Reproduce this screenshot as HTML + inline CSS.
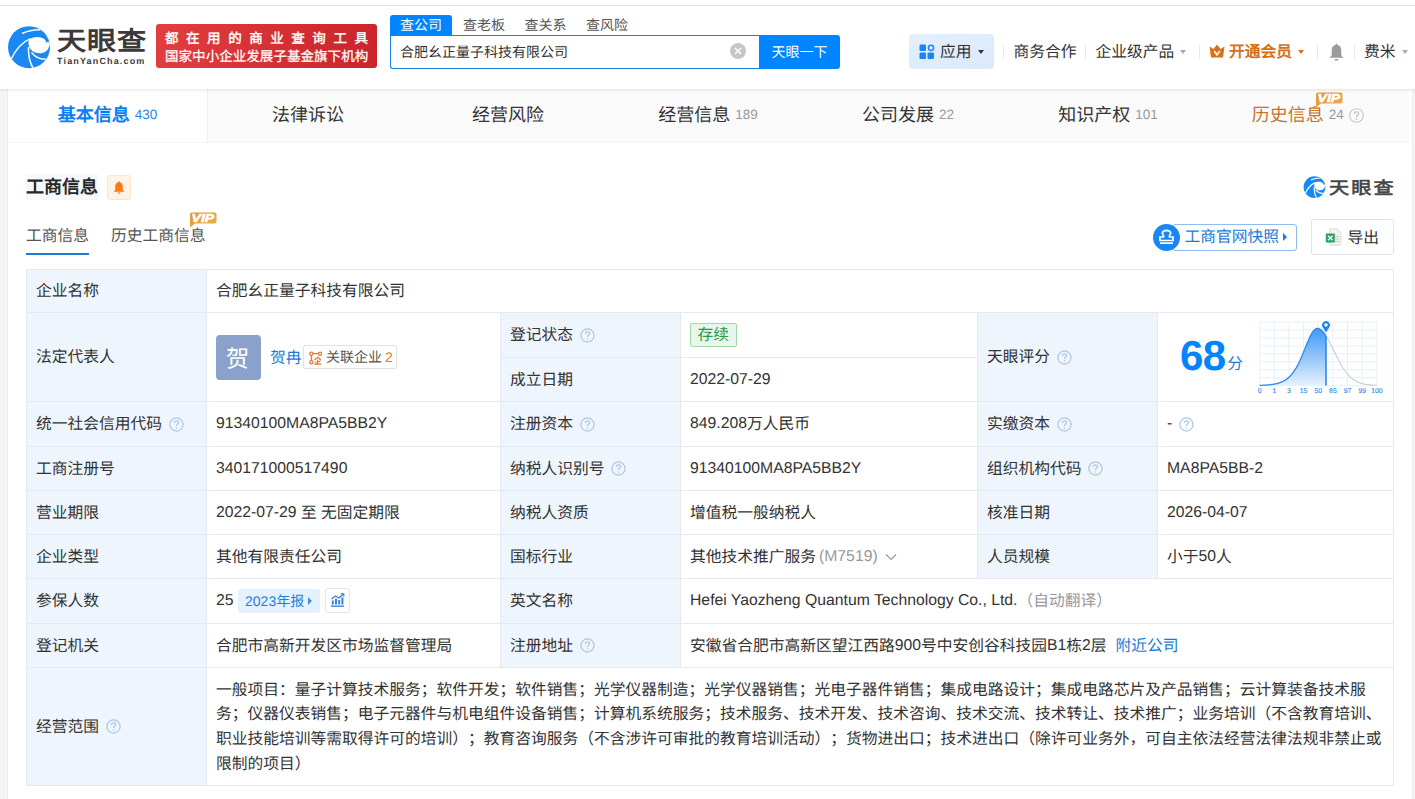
<!DOCTYPE html>
<html lang="zh-CN"><head><meta charset="utf-8">
<style>
*{box-sizing:border-box;margin:0;padding:0}
html,body{width:1415px;height:799px;overflow:hidden}
body{background:#f5f5f5;font-family:"Liberation Sans",sans-serif;color:#333;text-rendering:geometricPrecision;text-spacing-trim:space-all;position:relative}
.a{position:absolute;white-space:nowrap}
#hdr{position:absolute;left:0;top:0;width:1415px;height:89px;background:#fff}
#topline{position:absolute;left:0;top:5px;width:1415px;height:1px;background:#e6e6e6}
.sep{position:absolute;top:45px;width:1px;height:14px;background:#e8e8e8}
.tri{position:absolute;width:0;height:0;border-left:3.5px solid transparent;border-right:3.5px solid transparent;border-top:4.5px solid #999}
#card{position:absolute;left:8px;top:89px;width:1404px;height:710px;background:#fff}
#tabbar{position:absolute;left:0;top:0;width:1401px;height:53px;background:#fafafa}
.tab{position:absolute;top:0;width:200px;height:53px;line-height:53px;text-align:center;font-size:18px;color:#333}
.tab .n{font-size:13.5px;color:#999;margin-left:5px;position:relative;top:-2.5px}
.cell{position:absolute;display:flex;align-items:center;font-size:15.75px;line-height:20px;color:#333;white-space:nowrap}
.lab{background:#eef5fd;padding-left:9px}
.val{background:#fff;padding-left:9px}
.hl{position:absolute;background:#e4edf6}
.qi{margin-left:6.5px;flex:none}
.c{position:relative;top:1.2px}
.q{display:inline-block;width:14px;height:14px;border:1px solid #b7cfe8;border-radius:50%;margin-left:7px;position:relative;flex:none}
.q:after{content:"?";position:absolute;left:0;top:0;width:12px;height:12px;line-height:12px;text-align:center;font-size:10px;color:#b7cfe8}
</style></head><body>
<div id="hdr">
  <div id="topline"></div>
  <svg class="a" style="left:5px;top:22px" width="50" height="50" viewBox="0 0 50 50">
    <defs><clipPath id="lc"><circle cx="24" cy="25.2" r="21"/></clipPath></defs>
    <circle cx="24" cy="25.2" r="21" fill="#1a88f3"/>
    <g clip-path="url(#lc)">
    <path d="M24 17.5 C27 15 33 14.3 37.5 16 C40 17 41 18.5 41.2 20.5 L47 19 L47 24 L44.2 24 C43.5 28.5 39.5 31.3 34.5 31.3 C28.5 31.3 24 27 23.5 22 C23.4 20.3 23.6 18.8 24 17.5Z" fill="#fff"/>
    <path d="M6 37.5 C10.5 28 17 20 25.5 16.6" stroke="#fff" stroke-width="1.5" fill="none"/>
    <path d="M17 11.5 C22.5 9 29 7.6 35.5 7.8" stroke="#fff" stroke-width="1.5" fill="none"/>
    <path d="M23.6 25 C23 33 24.5 40 28.5 47" stroke="#fff" stroke-width="1.6" fill="none"/>
    <path d="M26.5 30.5 C30.5 35.5 35.5 37.5 41 37.2" stroke="#fff" stroke-width="1.5" fill="none"/>
    </g>
  </svg>
  <div class="a" style="left:56.5px;top:24px;font-size:26px;line-height:34px;font-weight:bold;color:#3d3939;letter-spacing:0.8px;transform:scaleX(1.12);transform-origin:0 0">天眼查</div>
  <div class="a" style="left:57px;top:55px;font-size:9px;line-height:12px;font-weight:bold;color:#3f3b3b;letter-spacing:1.15px">TianYanCha.com</div>
  <div class="a" style="left:156px;top:24px;width:221px;height:44px;border-radius:3px;background:linear-gradient(100deg,#e23d3f,#c9252a)"></div>
  <div class="a" style="left:165px;top:28.5px;font-size:13.5px;line-height:20px;color:#fff;letter-spacing:7.55px;-webkit-text-stroke:0.45px #fff">都在用的商业查询工具</div>
  <div class="a" style="left:165px;top:47px;font-size:13.5px;line-height:20px;color:#fff;letter-spacing:0.05px;-webkit-text-stroke:0.25px #fff">国家中小企业发展子基金旗下机构</div>
  <div class="a" style="left:390px;top:15px;width:62px;height:21px;background:#0084ff;border-radius:3px 3px 0 0"></div>
  <div class="a" style="left:400px;top:15px;font-size:14px;line-height:20px;color:#fff">查公司</div>
  <div class="a" style="left:463px;top:15px;font-size:14px;line-height:20px;color:#555">查老板</div>
  <div class="a" style="left:524.5px;top:15px;font-size:14px;line-height:20px;color:#555">查关系</div>
  <div class="a" style="left:586px;top:15px;font-size:14px;line-height:20px;color:#555">查风险</div>
  <div class="a" style="left:390px;top:35px;width:371px;height:34px;border:1px solid #1a7fe6;border-right:none;border-radius:0 0 0 3px;background:#fff"></div>
  <div class="a" style="left:400px;top:42px;font-size:14px;line-height:20px;color:#333">合肥幺正量子科技有限公司</div>
  <div class="a" style="left:729.8px;top:43px;width:16px;height:16px;border-radius:50%;background:#c4c6cc"></div>
  <svg class="a" style="left:729.8px;top:43px" width="16" height="16" viewBox="0 0 16 16"><path d="M5 5L11 11M11 5L5 11" stroke="#fff" stroke-width="1.5"/></svg>
  <div class="a" style="left:759px;top:35px;width:81px;height:34px;background:#0084ff;border-radius:0 3px 3px 0;color:#fff;font-size:14px;line-height:34px;text-align:center">天眼一下</div>

  <div class="a" style="left:909px;top:34px;width:85px;height:35px;border-radius:4px;background:linear-gradient(160deg,#e3effd,#dbe9fb)"></div>
  <svg class="a" style="left:919px;top:44px" width="16" height="16" viewBox="0 0 16 16">
    <rect x="0.5" y="0.5" width="6.5" height="6.5" rx="1.2" fill="#1a86f5"/>
    <circle cx="12" cy="3.8" r="2.6" fill="none" stroke="#1a86f5" stroke-width="1.5"/>
    <rect x="0.5" y="8.5" width="6.5" height="6.5" rx="1.2" fill="#1a86f5"/>
    <rect x="8.5" y="8.5" width="6.5" height="6.5" rx="1.2" fill="#1a86f5"/>
  </svg>
  <div class="a" style="left:940px;top:42px;font-size:15.75px;line-height:22px;color:#333">应用</div>
  <div class="tri" style="left:977.5px;top:50px;border-top-color:#333"></div>
  <div class="sep" style="left:1003px"></div>
  <div class="a" style="left:1013.5px;top:42px;font-size:15.75px;line-height:22px;color:#333">商务合作</div>
  <div class="sep" style="left:1085px"></div>
  <div class="a" style="left:1095.5px;top:42px;font-size:15.75px;line-height:22px;color:#333">企业级产品</div>
  <div class="tri" style="left:1180px;top:50px;border-top-color:#aaa"></div>
  <div class="sep" style="left:1199px"></div>
  <svg class="a" style="left:1209px;top:44px" width="16" height="14" viewBox="0 0 16 14">
    <path d="M0.5 2.5 L4.5 5 L8 0.5 L11.5 5 L15.5 2.5 L14 13.5 L2 13.5Z" fill="#d9701a"/>
    <path d="M5.2 7 L8 10.8 L10.8 7" stroke="#fff" stroke-width="1.6" fill="none"/>
  </svg>
  <div class="a" style="left:1229px;top:42px;font-size:15.75px;line-height:22px;color:#d5701a;font-weight:bold">开通会员</div>
  <div class="tri" style="left:1298px;top:50px;border-top-color:#d5701a"></div>
  <div class="sep" style="left:1317px"></div>
  <svg class="a" style="left:1329px;top:43px" width="15" height="18" viewBox="0 0 15 18">
    <path d="M7.5 0.5 C8.3 0.5 8.3 1.5 8.3 1.7 C11.5 2.5 12.3 5 12.3 8 L12.3 12.5 L14.5 14.8 L0.5 14.8 L2.7 12.5 L2.7 8 C2.7 5 3.5 2.5 6.7 1.7 C6.7 1.5 6.7 0.5 7.5 0.5Z" fill="#9a9ca0"/>
    <rect x="5.8" y="16" width="3.4" height="1.6" fill="#9a9ca0"/>
  </svg>
  <div class="sep" style="left:1354px"></div>
  <div class="a" style="left:1364px;top:42px;font-size:15.75px;line-height:22px;color:#333">费米</div>
  <div class="tri" style="left:1401.5px;top:50px;border-top-color:#aaa"></div>
</div>
<div id="card"></div>
<div class="a" style="left:7px;top:89px;width:1px;height:710px;background:#ededed"></div>
<div class="a" style="left:1412px;top:89px;width:1px;height:710px;background:#ededed"></div>
<div class="a" style="left:8px;top:89px;width:1401px;height:53px;background:#fafafa"></div>
<div class="a" style="left:8px;top:89px;width:199px;height:53px;background:#fff"></div>
<div class="a" style="left:207px;top:89px;width:1px;height:53px;background:#f0f0f0"></div>
<div class="a" style="left:8px;top:142px;width:1401px;height:1px;background:#f4f4f4"></div>
<div class="a" style="left:0;top:89px;width:1415px;height:4px;background:linear-gradient(rgba(0,0,0,0.075),rgba(0,0,0,0.02) 60%,rgba(0,0,0,0))"></div>
<div class="tab" style="left:8px;top:89px;width:199px"><span style="color:#0a80f2;font-weight:bold">基本信息</span><span class="n" style="color:#2a86e0">430</span></div>
<div class="tab" style="left:208px;top:89px">法律诉讼</div>
<div class="tab" style="left:408px;top:89px">经营风险</div>
<div class="tab" style="left:608px;top:89px">经营信息<span class="n">189</span></div>
<div class="tab" style="left:808px;top:89px">公司发展<span class="n">22</span></div>
<div class="tab" style="left:1008px;top:89px">知识产权<span class="n">101</span></div>
<div class="tab" style="left:1208px;top:89px"><span style="color:#c7742b">历史信息</span><span class="n">24</span><svg width="15" height="15" viewBox="0 0 15 15" style="margin-left:5.5px;vertical-align:-2px"><circle cx="7.5" cy="7.5" r="6.8" fill="none" stroke="#c3c8d0" stroke-width="1.1"/><path d="M5.4 5.9 C5.4 4.5 6.3 3.7 7.5 3.7 C8.8 3.7 9.6 4.5 9.6 5.6 C9.6 6.9 7.6 7.1 7.6 8.6 V9.2" fill="none" stroke="#b9bec7" stroke-width="1.15"/><circle cx="7.6" cy="11.1" r="0.8" fill="#b9bec7"/></svg></div>
<svg class="a" style="left:1315px;top:92px" width="28" height="16" viewBox="0 0 28 16"><defs><linearGradient id="vipg" x1="0" y1="0" x2="1" y2="1"><stop offset="0" stop-color="#e6952c"/><stop offset="1" stop-color="#efae55"/></linearGradient></defs>
  <path d="M3 0.5 H25.5 Q27.5 0.5 27.5 2.5 V9.5 Q27.5 11.5 25.5 11.5 H6 L1 15.5 V2.5 Q1 0.5 3 0.5Z" fill="url(#vipg)"/>
  <text x="2.6" y="10" font-family="Liberation Sans" font-weight="bold" font-style="italic" font-size="11.5" fill="#fff" stroke="#fff" stroke-width="0.6" textLength="22.5" lengthAdjust="spacingAndGlyphs">VIP</text>
</svg>

<div class="a" style="left:26px;top:174px;width:72px;height:26px;background:#f5f9fe"></div>
<div class="a" style="left:26px;top:174px;font-size:18px;line-height:26px;font-weight:bold;color:#282828">工商信息</div>
<div class="a" style="left:107px;top:175px;width:24px;height:25px;background:#fff3e8;border:1px solid #fbe4d2;border-radius:3px"></div>
<svg class="a" style="left:113px;top:181px" width="12" height="13" viewBox="0 0 12 13">
  <path d="M6 0.3 C6.7 0.3 6.8 1 6.8 1.2 C9.3 1.8 9.8 4 9.8 6 L9.8 9 L11.6 10.8 L0.4 10.8 L2.2 9 L2.2 6 C2.2 4 2.7 1.8 5.2 1.2 C5.2 1 5.3 0.3 6 0.3Z" fill="#ff7a0e"/>
  <path d="M4.3 11.6 H7.7 Q7.2 12.8 6 12.8 Q4.8 12.8 4.3 11.6Z" fill="#ff7a0e"/>
</svg>
<svg class="a" style="left:1302px;top:174px" width="26" height="26" viewBox="0 0 50 50">
    <defs><clipPath id="lc2"><circle cx="24" cy="25.2" r="21"/></clipPath></defs>
    <circle cx="24" cy="25.2" r="21" fill="#1a88f3"/>
    <g clip-path="url(#lc2)">
    <path d="M24 17.5 C27 15 33 14.3 37.5 16 C40 17 41 18.5 41.2 20.5 L47 19 L47 24 L44.2 24 C43.5 28.5 39.5 31.3 34.5 31.3 C28.5 31.3 24 27 23.5 22 C23.4 20.3 23.6 18.8 24 17.5Z" fill="#fff"/>
    <path d="M6 37.5 C10.5 28 17 20 25.5 16.6" stroke="#fff" stroke-width="2.2" fill="none"/>
    <path d="M17 11.5 C22.5 9 29 7.6 35.5 7.8" stroke="#fff" stroke-width="2.2" fill="none"/>
    <path d="M23.6 25 C23 33 24.5 40 28.5 47" stroke="#fff" stroke-width="2.3" fill="none"/>
    <path d="M26.5 30.5 C30.5 35.5 35.5 37.5 41 37.2" stroke="#fff" stroke-width="2.2" fill="none"/>
    </g>
</svg>
<div class="a" style="left:1329px;top:174.5px;font-size:17.5px;line-height:26px;font-weight:bold;color:#4a4848;letter-spacing:1.8px;transform:scaleX(1.15);transform-origin:0 0">天眼查</div>

<div class="a" style="left:26px;top:226px;font-size:15.75px;line-height:22px;color:#555">工商信息</div>
<div class="a" style="left:26px;top:253px;width:63px;height:2px;background:#1f7ad8"></div>
<div class="a" style="left:111px;top:226px;font-size:15.75px;line-height:22px;color:#555">历史工商信息</div>
<svg class="a" style="left:189px;top:212px" width="28" height="16" viewBox="0 0 28 16"><defs><linearGradient id="vipg2" x1="0" y1="1" x2="1" y2="0"><stop offset="0" stop-color="#e6952c"/><stop offset="0.5" stop-color="#efac55"/><stop offset="1" stop-color="#e3922a"/></linearGradient></defs>
  <path d="M3 0.5 H25.5 Q27.5 0.5 27.5 2.5 V9.5 Q27.5 11.5 25.5 11.5 H6 L1 15.5 V2.5 Q1 0.5 3 0.5Z" fill="url(#vipg)"/>
  <text x="2.6" y="10" font-family="Liberation Sans" font-weight="bold" font-style="italic" font-size="11.5" fill="#fff" stroke="#fff" stroke-width="0.6" textLength="22.5" lengthAdjust="spacingAndGlyphs">VIP</text>
</svg>

<div class="a" style="left:1172px;top:224px;width:125px;height:27px;border:1px solid #8ebcef;border-radius:3px"></div>
<div class="a" style="left:1153px;top:223.5px;width:27px;height:27px;border-radius:50%;background:#1a86f3"></div>
<svg class="a" style="left:1153px;top:223.5px" width="27" height="27" viewBox="0 0 27 27">
  <path d="M10.5 13 L10.5 11.5 C8.5 10 8.8 6.5 13.5 6.3 C18.2 6.5 18.5 10 16.5 11.5 L16.5 13 L20 13 L20 16.5 L7 16.5 L7 13Z" fill="none" stroke="#fff" stroke-width="1.7"/>
  <rect x="7" y="18.3" width="13" height="1.7" fill="#fff"/>
</svg>
<div class="a" style="left:1184.5px;top:227px;font-size:15.75px;line-height:22px;color:#1a7ad8">工商官网快照</div>
<div class="a" style="left:1283px;top:233px;width:0;height:0;border-top:4px solid transparent;border-bottom:4px solid transparent;border-left:4.5px solid #1a7ad8"></div>

<div class="a" style="left:1311px;top:219px;width:83px;height:36px;border:1px solid #dfe3ea;border-radius:3px"></div>
<svg class="a" style="left:1325px;top:228px" width="17" height="18" viewBox="0 0 17 18">
  <path d="M4.5 0.8 H12 L15.8 4.6 V16.5 Q15.8 17.2 15 17.2 H5.3 Q4.5 17.2 4.5 16.5Z" fill="#f1f1f1" stroke="#d6d6d6" stroke-width="0.8"/>
  <rect x="10.3" y="8" width="4" height="1" fill="#c9c9c9"/><rect x="10.3" y="10.5" width="4" height="1" fill="#c9c9c9"/><rect x="10.3" y="13" width="4" height="1" fill="#c9c9c9"/>
  <rect x="0.8" y="5.5" width="9" height="9" rx="0.8" fill="#21a464"/>
  <path d="M3 7.8 L7.6 12.2 M7.6 7.8 L3 12.2" stroke="#fff" stroke-width="1.4"/>
</svg>
<div class="a" style="left:1347.5px;top:227.5px;font-size:15.75px;line-height:22px;color:#333">导出</div>
<!--TABLE-->
<div class="a" style="left:26px;top:269px;width:1368px;height:517px;background:#e5eaf1"></div>
<div class="cell lab" style="left:27px;top:270px;width:179px;height:42px;"><span style="white-space:pre"><span class="c">企业名称</span></span></div>
<div class="cell val" style="left:207px;top:270px;width:1186px;height:42px;"><span style="white-space:pre"><span class="c">合肥幺正量子科技有限公司</span></span></div>
<div class="cell lab" style="left:27px;top:313px;width:179px;height:88px;"><span style="white-space:pre"><span class="c">法定代表人</span></span></div>
<div class="cell val" style="left:207px;top:313px;width:293px;height:88px;"><span style="display:inline-block;width:45px;height:45px;border-radius:4px;background:#8aa2cb;color:#fff;font-size:23.5px;line-height:48px;text-indent:-2px;text-align:center;flex:none;overflow:hidden">贺</span><span style="color:#1a7ad8;margin-left:9px;position:relative;top:1.5px">贺冉</span><span style="display:inline-flex;align-items:center;height:24px;border:1px solid #e3e3e3;border-radius:2px;margin-left:1px;padding:0 3.5px 0 5px;font-size:14px;color:#555"><svg width="13.5" height="14" viewBox="0 0 14 14" style="margin-right:4px;position:relative;top:0.5px"><circle cx="2.5" cy="2.5" r="1.7" fill="none" stroke="#e8762c" stroke-width="1.3"/><circle cx="11.5" cy="2.5" r="1.7" fill="none" stroke="#e8762c" stroke-width="1.3"/><circle cx="2.5" cy="11.5" r="1.7" fill="none" stroke="#e8762c" stroke-width="1.3"/><path d="M4.2 2.5H9.8M2.5 4.2V9.8" stroke="#e8762c" stroke-width="1.3"/><path d="M5.6 9.3L9 6L12.4 9.3M9 8.6V13.2M9.3 10.6H11.6M7.2 10.6V13.2M5.6 13.3H12.6" stroke="#e8762c" stroke-width="1.2" fill="none"/></svg>关联企业<span style="color:#e8762c;margin-left:3px">2</span></span></div>
<div class="cell lab" style="left:501px;top:313px;width:179px;height:44px;"><span style="white-space:pre"><span class="c">登记状态</span></span><svg class="qi" width="15" height="15" viewBox="0 0 15 15"><circle cx="7.5" cy="7.5" r="6.6" fill="none" stroke="#aec7e3" stroke-width="1.25"/><path d="M5.4 5.9 C5.4 4.5 6.3 3.8 7.5 3.8 C8.8 3.8 9.6 4.6 9.6 5.6 C9.6 6.9 7.6 7.1 7.6 8.6 V9.1" fill="none" stroke="#aec7e3" stroke-width="1.2"/><circle cx="7.6" cy="11" r="0.8" fill="#aec7e3"/></svg></div>
<div class="cell val" style="left:681px;top:313px;width:296px;height:44px;"><span style="display:inline-block;height:25px;line-height:23px;padding:0 6.5px;border:1px solid #9fd9ae;background:#e7f8eb;color:#2a9a4a;border-radius:2px;font-size:15.75px;height:24.5px">存续</span></div>
<div class="cell lab" style="left:501px;top:358px;width:179px;height:43px;"><span style="white-space:pre"><span class="c">成立日期</span></span></div>
<div class="cell val" style="left:681px;top:358px;width:296px;height:43px;"><span style="white-space:pre">2022-07-29</span></div>
<div class="cell lab" style="left:978px;top:313px;width:179px;height:88px;"><span style="white-space:pre"><span class="c">天眼评分</span></span><svg class="qi" width="15" height="15" viewBox="0 0 15 15"><circle cx="7.5" cy="7.5" r="6.6" fill="none" stroke="#aec7e3" stroke-width="1.25"/><path d="M5.4 5.9 C5.4 4.5 6.3 3.8 7.5 3.8 C8.8 3.8 9.6 4.6 9.6 5.6 C9.6 6.9 7.6 7.1 7.6 8.6 V9.1" fill="none" stroke="#aec7e3" stroke-width="1.2"/><circle cx="7.6" cy="11" r="0.8" fill="#aec7e3"/></svg></div>
<div class="cell val" style="left:1158px;top:313px;width:235px;height:88px;"><!--SCORE--><span style="font-size:42px;font-weight:bold;color:#0084ff;line-height:40px;margin-left:13px;letter-spacing:-0.5px;position:relative;top:-1.5px">68</span><span style="color:#1f7ad8;margin-left:1.5px;align-self:flex-end;margin-bottom:26px;font-size:15.75px;line-height:20px">分</span><svg class="a" style="left:97px;top:3px" width="130" height="82" viewBox="1255 315 130 82">
<defs><linearGradient id="gf" x1="0" y1="0" x2="0" y2="1"><stop offset="0" stop-color="#3f98f5"/><stop offset="1" stop-color="#e6f1fd"/></linearGradient></defs>
<g stroke="#e9f0f9" stroke-width="1"><line x1="1259.7" y1="321" x2="1259.7" y2="384.6"/><line x1="1274.3" y1="321" x2="1274.3" y2="384.6"/><line x1="1289.0" y1="321" x2="1289.0" y2="384.6"/><line x1="1303.6" y1="321" x2="1303.6" y2="384.6"/><line x1="1318.2" y1="321" x2="1318.2" y2="384.6"/><line x1="1332.9" y1="321" x2="1332.9" y2="384.6"/><line x1="1347.5" y1="321" x2="1347.5" y2="384.6"/><line x1="1362.2" y1="321" x2="1362.2" y2="384.6"/><line x1="1376.8" y1="321" x2="1376.8" y2="384.6"/><line x1="1259.7" y1="321.0" x2="1376.8" y2="321.0"/><line x1="1259.7" y1="328.9" x2="1376.8" y2="328.9"/><line x1="1259.7" y1="336.9" x2="1376.8" y2="336.9"/><line x1="1259.7" y1="344.9" x2="1376.8" y2="344.9"/><line x1="1259.7" y1="352.8" x2="1376.8" y2="352.8"/><line x1="1259.7" y1="360.8" x2="1376.8" y2="360.8"/><line x1="1259.7" y1="368.7" x2="1376.8" y2="368.7"/><line x1="1259.7" y1="376.7" x2="1376.8" y2="376.7"/><line x1="1259.7" y1="384.6" x2="1376.8" y2="384.6"/></g>
<polygon points="1259.7,384.4 1260.2,384.3 1260.7,384.3 1261.2,384.3 1261.7,384.3 1262.2,384.3 1262.7,384.2 1263.2,384.2 1263.7,384.2 1264.2,384.2 1264.7,384.1 1265.2,384.1 1265.7,384.1 1266.2,384.1 1266.7,384.0 1267.2,384.0 1267.7,383.9 1268.2,383.9 1268.7,383.9 1269.2,383.8 1269.7,383.8 1270.2,383.7 1270.7,383.6 1271.2,383.6 1271.7,383.5 1272.2,383.4 1272.7,383.4 1273.2,383.3 1273.7,383.2 1274.2,383.1 1274.7,383.0 1275.2,382.9 1275.7,382.8 1276.2,382.7 1276.7,382.6 1277.2,382.5 1277.7,382.3 1278.2,382.2 1278.7,382.1 1279.2,381.9 1279.7,381.7 1280.2,381.6 1280.7,381.4 1281.2,381.2 1281.7,381.0 1282.2,380.7 1282.7,380.5 1283.2,380.3 1283.7,380.0 1284.2,379.7 1284.7,379.4 1285.2,379.1 1285.7,378.8 1286.2,378.5 1286.7,378.1 1287.2,377.7 1287.7,377.3 1288.2,376.9 1288.7,376.5 1289.2,376.0 1289.7,375.5 1290.2,375.0 1290.7,374.5 1291.2,373.9 1291.7,373.3 1292.2,372.7 1292.7,372.1 1293.2,371.4 1293.7,370.7 1294.2,370.0 1294.7,369.2 1295.2,368.4 1295.7,367.6 1296.2,366.8 1296.7,365.9 1297.2,365.0 1297.7,364.0 1298.2,363.1 1298.7,362.1 1299.2,361.0 1299.7,360.0 1300.2,358.9 1300.7,357.8 1301.2,356.7 1301.7,355.5 1302.2,354.3 1302.7,353.2 1303.2,351.9 1303.7,350.7 1304.2,349.5 1304.7,348.3 1305.2,347.0 1305.7,345.8 1306.2,344.6 1306.7,343.3 1307.2,342.1 1307.7,340.9 1308.2,339.8 1308.7,338.6 1309.2,337.5 1309.7,336.4 1310.2,335.4 1310.7,334.4 1311.2,333.4 1311.7,332.5 1312.2,331.7 1312.7,330.9 1313.2,330.2 1313.7,329.6 1314.2,329.1 1314.7,328.6 1315.2,328.2 1315.7,327.9 1316.2,327.6 1316.7,327.5 1317.2,327.4 1317.7,327.4 1318.2,327.5 1318.7,327.6 1319.2,327.8 1319.7,328.0 1320.2,328.3 1320.7,328.6 1321.2,329.0 1321.7,329.4 1322.2,329.9 1322.7,330.4 1323.2,331.0 1323.7,331.6 1324.2,332.2 1324.7,332.9 1325.2,333.6 1325.7,334.4 1326.0,334.9 1326.0,384.6 1259.7,384.6" fill="url(#gf)"/>
<polyline points="1259.7,384.4 1260.2,384.3 1260.7,384.3 1261.2,384.3 1261.7,384.3 1262.2,384.3 1262.7,384.2 1263.2,384.2 1263.7,384.2 1264.2,384.2 1264.7,384.1 1265.2,384.1 1265.7,384.1 1266.2,384.1 1266.7,384.0 1267.2,384.0 1267.7,383.9 1268.2,383.9 1268.7,383.9 1269.2,383.8 1269.7,383.8 1270.2,383.7 1270.7,383.6 1271.2,383.6 1271.7,383.5 1272.2,383.4 1272.7,383.4 1273.2,383.3 1273.7,383.2 1274.2,383.1 1274.7,383.0 1275.2,382.9 1275.7,382.8 1276.2,382.7 1276.7,382.6 1277.2,382.5 1277.7,382.3 1278.2,382.2 1278.7,382.1 1279.2,381.9 1279.7,381.7 1280.2,381.6 1280.7,381.4 1281.2,381.2 1281.7,381.0 1282.2,380.7 1282.7,380.5 1283.2,380.3 1283.7,380.0 1284.2,379.7 1284.7,379.4 1285.2,379.1 1285.7,378.8 1286.2,378.5 1286.7,378.1 1287.2,377.7 1287.7,377.3 1288.2,376.9 1288.7,376.5 1289.2,376.0 1289.7,375.5 1290.2,375.0 1290.7,374.5 1291.2,373.9 1291.7,373.3 1292.2,372.7 1292.7,372.1 1293.2,371.4 1293.7,370.7 1294.2,370.0 1294.7,369.2 1295.2,368.4 1295.7,367.6 1296.2,366.8 1296.7,365.9 1297.2,365.0 1297.7,364.0 1298.2,363.1 1298.7,362.1 1299.2,361.0 1299.7,360.0 1300.2,358.9 1300.7,357.8 1301.2,356.7 1301.7,355.5 1302.2,354.3 1302.7,353.2 1303.2,351.9 1303.7,350.7 1304.2,349.5 1304.7,348.3 1305.2,347.0 1305.7,345.8 1306.2,344.6 1306.7,343.3 1307.2,342.1 1307.7,340.9 1308.2,339.8 1308.7,338.6 1309.2,337.5 1309.7,336.4 1310.2,335.4 1310.7,334.4 1311.2,333.4 1311.7,332.5 1312.2,331.7 1312.7,330.9 1313.2,330.2 1313.7,329.6 1314.2,329.1 1314.7,328.6 1315.2,328.2 1315.7,327.9 1316.2,327.6 1316.7,327.5 1317.2,327.4 1317.7,327.4 1318.2,327.5 1318.7,327.6 1319.2,327.8 1319.7,328.0 1320.2,328.3 1320.7,328.6 1321.2,329.0 1321.7,329.4 1322.2,329.9 1322.7,330.4 1323.2,331.0 1323.7,331.6 1324.2,332.2 1324.7,332.9 1325.2,333.6 1325.7,334.4 1326.0,334.9" fill="none" stroke="#2a88ef" stroke-width="1.3"/>
<polyline points="1326.0,334.9 1326.2,335.2 1326.7,336.0 1327.2,336.9 1327.7,337.7 1328.2,338.6 1328.7,339.6 1329.2,340.5 1329.7,341.5 1330.2,342.4 1330.7,343.4 1331.2,344.4 1331.7,345.5 1332.2,346.5 1332.7,347.5 1333.2,348.5 1333.7,349.6 1334.2,350.6 1334.7,351.6 1335.2,352.6 1335.7,353.6 1336.2,354.6 1336.7,355.6 1337.2,356.6 1337.7,357.6 1338.2,358.6 1338.7,359.5 1339.2,360.5 1339.7,361.4 1340.2,362.3 1340.7,363.1 1341.2,364.0 1341.7,364.8 1342.2,365.7 1342.7,366.5 1343.2,367.2 1343.7,368.0 1344.2,368.7 1344.7,369.5 1345.2,370.1 1345.7,370.8 1346.2,371.5 1346.7,372.1 1347.2,372.7 1347.7,373.3 1348.2,373.8 1348.7,374.4 1349.2,374.9 1349.7,375.4 1350.2,375.9 1350.7,376.3 1351.2,376.8 1351.7,377.2 1352.2,377.6 1352.7,378.0 1353.2,378.4 1353.7,378.7 1354.2,379.0 1354.7,379.4 1355.2,379.7 1355.7,380.0 1356.2,380.2 1356.7,380.5 1357.2,380.7 1357.7,381.0 1358.2,381.2 1358.7,381.4 1359.2,381.6 1359.7,381.8 1360.2,382.0 1360.7,382.1 1361.2,382.3 1361.7,382.4 1362.2,382.6 1362.7,382.7 1363.2,382.8 1363.7,382.9 1364.2,383.1 1364.7,383.2 1365.2,383.3 1365.7,383.3 1366.2,383.4 1366.7,383.5 1367.2,383.6 1367.7,383.7 1368.2,383.7 1368.7,383.8 1369.2,383.8 1369.7,383.9 1370.2,383.9 1370.7,384.0 1371.2,384.0 1371.7,384.1 1372.2,384.1 1372.7,384.1 1373.2,384.2 1373.7,384.2 1374.2,384.2 1374.7,384.3 1375.2,384.3 1375.7,384.3 1376.2,384.3 1376.7,384.4" fill="none" stroke="#c6cdd7" stroke-width="1.1"/>
<line x1="1326.0" y1="334.9" x2="1326.0" y2="384.6" stroke="#2a88ef" stroke-width="1.6"/>
<path d="M1326.0 331.5 L1322.7 326.3 A3.95 3.95 0 1 1 1329.3 326.3Z" fill="#1a86f3"/>
<circle cx="1326.0" cy="323.9" r="1.7" fill="#fff"/>
<g font-family="Liberation Sans" font-size="6.8" fill="#3b8fe6" stroke="#3b8fe6" stroke-width="0.15" text-anchor="middle"><text x="1259.7" y="391.6">0</text><text x="1274.3" y="391.6">1</text><text x="1289.0" y="391.6">3</text><text x="1303.6" y="391.6">15</text><text x="1318.2" y="391.6">50</text><text x="1332.9" y="391.6">85</text><text x="1347.5" y="391.6">97</text><text x="1362.2" y="391.6">99</text><text x="1376.8" y="391.6">100</text></g>
</svg><!--/SCORE--></div>
<div class="cell lab" style="left:27px;top:402px;width:179px;height:44px;"><span style="white-space:pre"><span class="c">统一社会信用代码</span></span><svg class="qi" width="15" height="15" viewBox="0 0 15 15"><circle cx="7.5" cy="7.5" r="6.6" fill="none" stroke="#aec7e3" stroke-width="1.25"/><path d="M5.4 5.9 C5.4 4.5 6.3 3.8 7.5 3.8 C8.8 3.8 9.6 4.6 9.6 5.6 C9.6 6.9 7.6 7.1 7.6 8.6 V9.1" fill="none" stroke="#aec7e3" stroke-width="1.2"/><circle cx="7.6" cy="11" r="0.8" fill="#aec7e3"/></svg></div>
<div class="cell val" style="left:207px;top:402px;width:293px;height:44px;"><span style="white-space:pre">91340100MA8PA5BB2Y</span></div>
<div class="cell lab" style="left:501px;top:402px;width:179px;height:44px;"><span style="white-space:pre"><span class="c">注册资本</span></span><svg class="qi" width="15" height="15" viewBox="0 0 15 15"><circle cx="7.5" cy="7.5" r="6.6" fill="none" stroke="#aec7e3" stroke-width="1.25"/><path d="M5.4 5.9 C5.4 4.5 6.3 3.8 7.5 3.8 C8.8 3.8 9.6 4.6 9.6 5.6 C9.6 6.9 7.6 7.1 7.6 8.6 V9.1" fill="none" stroke="#aec7e3" stroke-width="1.2"/><circle cx="7.6" cy="11" r="0.8" fill="#aec7e3"/></svg></div>
<div class="cell val" style="left:681px;top:402px;width:296px;height:44px;"><span style="white-space:pre">849.208<span class="c">万人民币</span></span></div>
<div class="cell lab" style="left:978px;top:402px;width:179px;height:44px;"><span style="white-space:pre"><span class="c">实缴资本</span></span><svg class="qi" width="15" height="15" viewBox="0 0 15 15"><circle cx="7.5" cy="7.5" r="6.6" fill="none" stroke="#aec7e3" stroke-width="1.25"/><path d="M5.4 5.9 C5.4 4.5 6.3 3.8 7.5 3.8 C8.8 3.8 9.6 4.6 9.6 5.6 C9.6 6.9 7.6 7.1 7.6 8.6 V9.1" fill="none" stroke="#aec7e3" stroke-width="1.2"/><circle cx="7.6" cy="11" r="0.8" fill="#aec7e3"/></svg></div>
<div class="cell val" style="left:1158px;top:402px;width:235px;height:44px;"><span style="white-space:pre">-</span><svg class="qi" width="15" height="15" viewBox="0 0 15 15"><circle cx="7.5" cy="7.5" r="6.6" fill="none" stroke="#aec7e3" stroke-width="1.25"/><path d="M5.4 5.9 C5.4 4.5 6.3 3.8 7.5 3.8 C8.8 3.8 9.6 4.6 9.6 5.6 C9.6 6.9 7.6 7.1 7.6 8.6 V9.1" fill="none" stroke="#aec7e3" stroke-width="1.2"/><circle cx="7.6" cy="11" r="0.8" fill="#aec7e3"/></svg></div>
<div class="cell lab" style="left:27px;top:447px;width:179px;height:43px;"><span style="white-space:pre"><span class="c">工商注册号</span></span></div>
<div class="cell val" style="left:207px;top:447px;width:293px;height:43px;"><span style="white-space:pre">340171000517490</span></div>
<div class="cell lab" style="left:501px;top:447px;width:179px;height:43px;"><span style="white-space:pre"><span class="c">纳税人识别号</span></span><svg class="qi" width="15" height="15" viewBox="0 0 15 15"><circle cx="7.5" cy="7.5" r="6.6" fill="none" stroke="#aec7e3" stroke-width="1.25"/><path d="M5.4 5.9 C5.4 4.5 6.3 3.8 7.5 3.8 C8.8 3.8 9.6 4.6 9.6 5.6 C9.6 6.9 7.6 7.1 7.6 8.6 V9.1" fill="none" stroke="#aec7e3" stroke-width="1.2"/><circle cx="7.6" cy="11" r="0.8" fill="#aec7e3"/></svg></div>
<div class="cell val" style="left:681px;top:447px;width:296px;height:43px;"><span style="white-space:pre">91340100MA8PA5BB2Y</span></div>
<div class="cell lab" style="left:978px;top:447px;width:179px;height:43px;"><span style="white-space:pre"><span class="c">组织机构代码</span></span><svg class="qi" width="15" height="15" viewBox="0 0 15 15"><circle cx="7.5" cy="7.5" r="6.6" fill="none" stroke="#aec7e3" stroke-width="1.25"/><path d="M5.4 5.9 C5.4 4.5 6.3 3.8 7.5 3.8 C8.8 3.8 9.6 4.6 9.6 5.6 C9.6 6.9 7.6 7.1 7.6 8.6 V9.1" fill="none" stroke="#aec7e3" stroke-width="1.2"/><circle cx="7.6" cy="11" r="0.8" fill="#aec7e3"/></svg></div>
<div class="cell val" style="left:1158px;top:447px;width:235px;height:43px;"><span style="white-space:pre">MA8PA5BB-2</span></div>
<div class="cell lab" style="left:27px;top:491px;width:179px;height:43px;"><span style="white-space:pre"><span class="c">营业期限</span></span></div>
<div class="cell val" style="left:207px;top:491px;width:293px;height:43px;"><span style="white-space:pre">2022-07-29 <span class="c">至</span> <span class="c">无固定期限</span></span></div>
<div class="cell lab" style="left:501px;top:491px;width:179px;height:43px;"><span style="white-space:pre"><span class="c">纳税人资质</span></span></div>
<div class="cell val" style="left:681px;top:491px;width:296px;height:43px;"><span style="white-space:pre"><span class="c">增值税一般纳税人</span></span></div>
<div class="cell lab" style="left:978px;top:491px;width:179px;height:43px;"><span style="white-space:pre"><span class="c">核准日期</span></span></div>
<div class="cell val" style="left:1158px;top:491px;width:235px;height:43px;"><span style="white-space:pre">2026-04-07</span></div>
<div class="cell lab" style="left:27px;top:535px;width:179px;height:43px;"><span style="white-space:pre"><span class="c">企业类型</span></span></div>
<div class="cell val" style="left:207px;top:535px;width:293px;height:43px;"><span style="white-space:pre"><span class="c">其他有限责任公司</span></span></div>
<div class="cell lab" style="left:501px;top:535px;width:179px;height:43px;"><span style="white-space:pre"><span class="c">国标行业</span></span></div>
<div class="cell val" style="left:681px;top:535px;width:296px;height:43px;"><span style="white-space:pre"><span class="c">其他技术推广服务</span><span style="color:#999;margin-left:3px">(M7519)</span><svg width="12" height="8" viewBox="0 0 12 8" style="margin-left:7px"><path d="M1 1.5L6 6.5L11 1.5" fill="none" stroke="#999" stroke-width="1.2"/></svg></span></div>
<div class="cell lab" style="left:978px;top:535px;width:179px;height:43px;"><span style="white-space:pre"><span class="c">人员规模</span></span></div>
<div class="cell val" style="left:1158px;top:535px;width:235px;height:43px;"><span style="white-space:pre"><span class="c">小于</span>50<span class="c">人</span></span></div>
<div class="cell lab" style="left:27px;top:579px;width:179px;height:44px;"><span style="white-space:pre"><span class="c">参保人数</span></span></div>
<div class="cell val" style="left:207px;top:579px;width:293px;height:44px;"><span>25</span><span style="display:inline-flex;align-items:center;height:24px;background:#e5f1fd;color:#1e7ee0;border-radius:3px;margin-left:4.5px;padding:0 8px 0 7px;font-size:14px;height:24.5px"><span>2023年报</span><span style="display:inline-block;width:0;height:0;border-top:4px solid transparent;border-bottom:4px solid transparent;border-left:4.5px solid #3a8fe6;margin-left:3.5px"></span></span><span style="display:inline-flex;align-items:center;justify-content:center;width:25px;height:25px;border:1px solid #e1e4ea;border-radius:3px;margin-left:5px;position:relative;top:-1px"><svg width="15" height="14" viewBox="0 0 15 14"><path d="M1 13.2H14" stroke="#2a7fd8" stroke-width="1.3"/><path d="M2.8 11.5V7.5M6 11.5V5.8M9.2 11.5V7M12.4 11.5V4.5" stroke="#2a7fd8" stroke-width="1.9"/><path d="M1.5 6L5.5 3L9 5L13.3 1" stroke="#2a7fd8" stroke-width="1.2" fill="none"/><path d="M10.8 0.7H13.8V3.7" stroke="#2a7fd8" stroke-width="1.1" fill="none"/></svg></span></div>
<div class="cell lab" style="left:501px;top:579px;width:179px;height:44px;"><span style="white-space:pre"><span class="c">英文名称</span></span></div>
<div class="cell val" style="left:681px;top:579px;width:712px;height:44px;"><span style="white-space:pre">Hefei Yaozheng Quantum Technology Co., Ltd.<span style="color:#999;margin-left:0px"><span class="c">（自动翻译）</span></span></span></div>
<div class="cell lab" style="left:27px;top:624px;width:179px;height:43px;"><span style="white-space:pre"><span class="c">登记机关</span></span></div>
<div class="cell val" style="left:207px;top:624px;width:293px;height:43px;"><span style="white-space:pre"><span class="c">合肥市高新开发区市场监督管理局</span></span></div>
<div class="cell lab" style="left:501px;top:624px;width:179px;height:43px;"><span style="white-space:pre"><span class="c">注册地址</span></span><svg class="qi" width="15" height="15" viewBox="0 0 15 15"><circle cx="7.5" cy="7.5" r="6.6" fill="none" stroke="#aec7e3" stroke-width="1.25"/><path d="M5.4 5.9 C5.4 4.5 6.3 3.8 7.5 3.8 C8.8 3.8 9.6 4.6 9.6 5.6 C9.6 6.9 7.6 7.1 7.6 8.6 V9.1" fill="none" stroke="#aec7e3" stroke-width="1.2"/><circle cx="7.6" cy="11" r="0.8" fill="#aec7e3"/></svg></div>
<div class="cell val" style="left:681px;top:624px;width:712px;height:43px;"><span style="white-space:pre"><span class="c">安徽省合肥市高新区望江西路</span>900<span class="c">号中安创谷科技园</span>B1<span class="c">栋</span>2<span class="c">层</span><span style="color:#1a7ad8;margin-left:9px"><span class="c">附近公司</span></span></span></div>
<div class="cell lab" style="left:27px;top:668px;width:179px;height:117px;"><span style="white-space:pre"><span class="c">经营范围</span></span><svg class="qi" width="15" height="15" viewBox="0 0 15 15"><circle cx="7.5" cy="7.5" r="6.6" fill="none" stroke="#aec7e3" stroke-width="1.25"/><path d="M5.4 5.9 C5.4 4.5 6.3 3.8 7.5 3.8 C8.8 3.8 9.6 4.6 9.6 5.6 C9.6 6.9 7.6 7.1 7.6 8.6 V9.1" fill="none" stroke="#aec7e3" stroke-width="1.2"/><circle cx="7.6" cy="11" r="0.8" fill="#aec7e3"/></svg></div>
<div class="cell val" style="left:207px;top:668px;width:1186px;height:117px;"><div style="line-height:24.7px;position:relative;top:1.6px">一般项目：量子计算技术服务；软件开发；软件销售；光学仪器制造；光学仪器销售；光电子器件销售；集成电路设计；集成电路芯片及产品销售；云计算装备技术服<br>务；仪器仪表销售；电子元器件与机电组件设备销售；计算机系统服务；技术服务、技术开发、技术咨询、技术交流、技术转让、技术推广；业务培训（不含教育培训、<br>职业技能培训等需取得许可的培训）；教育咨询服务（不含涉许可审批的教育培训活动）；货物进出口；技术进出口（除许可业务外，可自主依法经营法律法规非禁止或<br>限制的项目）</div></div>
<!--/TABLE-->
</body></html>
